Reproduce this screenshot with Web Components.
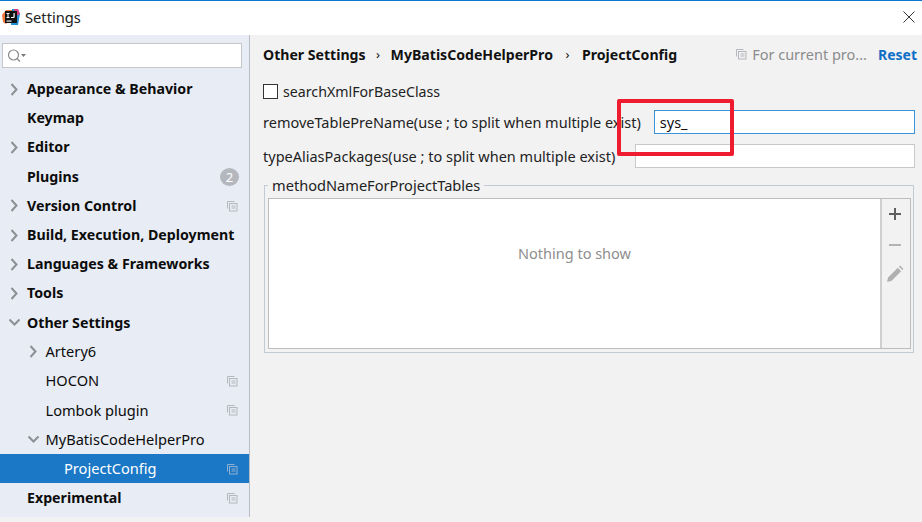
<!DOCTYPE html>
<html>
<head>
<meta charset="utf-8">
<title>Settings</title>
<style>
html, body { margin: 0; padding: 0; background: #fff; }
body { font-family: "Noto Sans", "Open Sans", sans-serif; color: #111; width: 922px; height: 522px; overflow: hidden; }
</style>
</head>
<body>
<settings-window>
    <title-bar slot="title">Settings</title-bar>
    <side-bar slot="side">
        <tree-row arrow="right" bold>Appearance &amp; Behavior</tree-row>
        <tree-row bold>Keymap</tree-row>
        <tree-row arrow="right" bold>Editor</tree-row>
        <tree-row bold badge="2">Plugins</tree-row>
        <tree-row arrow="right" bold copy>Version Control</tree-row>
        <tree-row arrow="right" bold>Build, Execution, Deployment</tree-row>
        <tree-row arrow="right" bold>Languages &amp; Frameworks</tree-row>
        <tree-row arrow="right" bold>Tools</tree-row>
        <tree-row arrow="down" bold>Other Settings</tree-row>
        <tree-row arrow="right" level="1">Artery6</tree-row>
        <tree-row level="1" copy>HOCON</tree-row>
        <tree-row level="1" copy>Lombok plugin</tree-row>
        <tree-row arrow="down" level="1">MyBatisCodeHelperPro</tree-row>
        <tree-row level="2" copy selected>ProjectConfig</tree-row>
        <tree-row bold copy>Experimental</tree-row>
    </side-bar>
    <config-pane slot="main"></config-pane>
</settings-window>

<script>
const COPY_ICON = `<svg width="12" height="12" viewBox="0 0 12 12" fill="none" stroke="currentColor" stroke-width="1">
    <path d="M1.5 8.5v-7h7"/><rect x="3.5" y="3.5" width="7.5" height="7.5"/><path d="M5.5 6h4M5.5 8h4"/></svg>`;

class SettingsWindow extends HTMLElement {
    constructor() {
        super();
        this.attachShadow({ mode: 'open' });
        this.shadowRoot.innerHTML = `
        <style>
            :host { display: flex; flex-direction: column; width: 922px; height: 522px; background: #fff; }
            .body { display: flex; height: 482px; background: #f2f2f3; }
            .foot { flex: 1; background: #f2f2f3; }
        </style>
        <slot name="title"></slot>
        <div class="body"><slot name="side"></slot><slot name="main"></slot></div>
        <div class="foot"></div>`;
    }
}

class TitleBar extends HTMLElement {
    constructor() {
        super();
        this.attachShadow({ mode: 'open' });
        this.shadowRoot.innerHTML = `
        <style>
            :host { display: flex; align-items: center; height: 35px; box-sizing: border-box; border-top: 1px solid #0a78d0;
                padding: 0 0 2px 2px; background: #fff; font-size: 14.7px; color: #222; }
            .logo { width: 18px; height: 18px; margin-right: 5px; flex: none; }
            .grow { flex: 1; }
            .close { width: 12px; height: 12px; margin-right: 7px; flex: none; }
        </style>
        <svg class="logo" viewBox="0 0 18 18">
            <path d="M0 7 4 2h6v8l-6 6-3-2z" fill="#f2783c"/>
            <path d="M10 1h6l2 5-2 11H9z" fill="#1f8fd8"/>
            <path d="M12 1h4l2 5-4 2z" fill="#e23d7d"/>
            <rect x="3" y="3" width="12" height="12" fill="#111"/>
            <rect x="4.500" y="12.500" width="5" height="1.100" fill="#fff"/>
            <path d="M4.500 5h3v.9h-1v3.200h1v.9h-3v-.9h1V5.900h-1zM11.500 5h1.200v3.900q0 1.100-1.400 1.100H9v-1h2q.5 0 .5-.4z" fill="#fff"/>
        </svg>
        <slot></slot>
        <span class="grow"></span>
        <svg class="close" viewBox="0 0 12 12" stroke="#333" stroke-width="1" fill="none"><path d="M.5.500l11 11M11.500.500l-11 11"/></svg>`;
    }
}

class SideBar extends HTMLElement {
    constructor() {
        super();
        this.attachShadow({ mode: 'open' });
        this.shadowRoot.innerHTML = `
        <style>
            :host { display: flex; flex-direction: column; box-sizing: border-box; width: 250px; height: 482px;
                background: #e8ecf4; border-right: 1px solid #b9bcc2; }
            .search { display: flex; align-items: center; height: 25px; box-sizing: border-box; margin: 8px 7px 6.500px 2px;
                background: #fff; border: 1px solid #c4c6c9; padding-left: 4px; }
            .rows { display: flex; flex-direction: column; }
        </style>
        <div class="search">
            <svg width="20" height="16" viewBox="0 0 20 16" fill="none" stroke="#8a8a8a" stroke-width="1.200">
                <circle cx="6.500" cy="7" r="5"/><path d="M10 10.500l3 3"/><path d="M14 6h5l-2.500 3z" fill="#777" stroke="none"/>
            </svg>
        </div>
        <div class="rows"><slot></slot></div>`;
    }
}

class TreeRow extends HTMLElement {
    constructor() {
        super();
        this.attachShadow({ mode: 'open' });
    }

    connectedCallback() {
        const level = Number(this.getAttribute('level') || 0);
        const arrow = this.getAttribute('arrow');
        const badge = this.getAttribute('badge');
        const selected = this.hasAttribute('selected');
        const bold = this.hasAttribute('bold');
        const arrowPath = arrow === 'down' ? 'M1.500 3.500l5 5 5-5' : 'M3.500 1l5 5.500-5 5.500';

        this.shadowRoot.innerHTML = `
        <style>
            :host { display: flex; align-items: center; height: 29.200px; flex: none; box-sizing: border-box;
                padding-left: ${8 + level * 18.500}px; padding-right: 11px; font-size: ${bold ? 14.2 : 14.6}px; line-height: 20px;
                font-weight: ${bold ? 700 : 400};
                background: ${selected ? '#1b78c6' : 'transparent'}; color: ${selected ? '#fff' : '#0c0c0c'}; }
            .arrow { width: 13px; height: 13px; flex: none; margin-right: 6px; }
            .arrow.none { visibility: hidden; }
            .text { flex: 1; white-space: nowrap; padding-bottom: ${bold ? 0 : 1}px; }
            .copy { display: flex; color: ${selected ? '#8fb0cf' : '#b4b7bb'}; }
            .badge { width: 19px; height: 18px; border-radius: 50%; background: #b4b8be; color: #fff; font-size: 13px;
                font-weight: 400; text-align: center; line-height: 18px; margin-right: -1px; }
        </style>
        <svg class="arrow ${arrow ? '' : 'none'}" viewBox="0 0 13 13" fill="none" stroke="#8c8f93" stroke-width="2"><path d="${arrowPath}"/></svg>
        <span class="text"><slot></slot></span>
        ${badge ? `<span class="badge">${badge}</span>` : ''}
        ${this.hasAttribute('copy') ? `<span class="copy">${COPY_ICON}</span>` : ''}`;
    }
}

class ConfigPane extends HTMLElement {
    constructor() {
        super();
        this.attachShadow({ mode: 'open' });
        this.shadowRoot.innerHTML = `
        <style>
            :host { display: block; position: relative; flex: 1; box-sizing: border-box; padding: 0 7px 0 13px; font-size: 14.5px; color: #222; }
            .crumbs { display: flex; align-items: center; height: 38px; margin-right: -2px; font-weight: 700; font-size: 14.1px; color: #111; white-space: nowrap; }
            .sep { margin: 0 10.500px; font-weight: 400; font-size: 13px; }
            .sep.two { margin: 0 12.500px; }
            .grow { flex: 1; }
            .scope { display: flex; align-items: center; gap: 5px; margin-right: 11px; font-weight: 400; font-size: 14.5px; color: #8c8c8c; }
            .scope span { display: flex; color: #b4b7bb; }
            .reset { color: #0f6fc6; font-size: 14px; }
            .check { display: flex; align-items: center; height: 22px; margin-top: 7px; font-size: 14.2px; }
            .box { width: 13px; height: 13px; border: 1px solid #333; background: #fff; margin-right: 5px; }
            .field { display: flex; align-items: center; height: 24px; white-space: nowrap; }
            .field.a { margin-top: 8px; }
            .field.b { margin-top: 10px; }
            .input { flex: 1; height: 24px; box-sizing: border-box; background: #fff; border: 1px solid #c9c9c9; padding-left: 5px; line-height: 22px; color: #111; }
            .a .input { margin-left: 13px; border-color: #3d93d8; }
            .b .input { margin-left: 20px; }
            fieldset-box { margin-top: 17px; }
            .mark { position: absolute; left: 367px; top: 64px; width: 117px; height: 57px; box-sizing: border-box;
                border: 4px solid #ee1c2e; border-radius: 2px; }
        </style>
        <div class="crumbs">
            <span>Other Settings</span><span class="sep">›</span>
            <span>MyBatisCodeHelperPro</span><span class="sep two">›</span>
            <span>ProjectConfig</span>
            <span class="grow"></span>
            <span class="scope"><span>${COPY_ICON}</span>For current pro...</span>
            <span class="reset">Reset</span>
        </div>
        <div class="check"><span class="box"></span>searchXmlForBaseClass</div>
        <div class="field a">removeTablePreName(use ; to split when multiple exist)<div class="input">sys_</div></div>
        <div class="field b">typeAliasPackages(use ; to split when multiple exist)<div class="input"></div></div>
        <fieldset-box label="methodNameForProjectTables"></fieldset-box>
        <div class="mark"></div>`;
    }
}

class FieldsetBox extends HTMLElement {
    constructor() {
        super();
        this.attachShadow({ mode: 'open' });
    }

    connectedCallback() {
        this.shadowRoot.innerHTML = `
        <style>
            :host { display: block; position: relative; height: 168px; box-sizing: border-box; margin-left: 1px; margin-right: 1px;
                border: 1px solid #c3cad6; padding: 12px 2px 2px 3px; }
            .label { position: absolute; left: 3px; top: -10px; padding: 0 4px; background: #f2f2f3; line-height: 19px; font-size: 14.6px; }
            .table { display: flex; height: 151px; box-sizing: border-box; border: 1px solid #bdbdbd; }
            .empty { flex: 1; display: flex; align-items: center; justify-content: center; background: #fff; color: #8e8e8e; padding-bottom: 41px; }
            .tools { width: 30px; box-sizing: border-box; border-left: 2px solid #cfcfcf; display: flex; flex-direction: column; align-items: center; padding: 8px 2px 0 0; gap: 14px; }
        </style>
        <div class="label">${this.getAttribute('label')}</div>
        <div class="table">
            <div class="empty">Nothing to show</div>
            <div class="tools">
                <svg width="14" height="14" viewBox="0 0 14 14" fill="#5f5f5f"><path d="M6 1h2v5h5v2H8v5H6V8H1V6h5z"/></svg>
                <svg width="14" height="14" style="margin-top:3px" viewBox="0 0 14 14" fill="#b3b3b3"><path d="M1 6h12v2H1z"/></svg>
                <svg width="18" height="18" style="margin-top:-1px" viewBox="0 0 16 16" fill="#b0b0b0"><path d="M1 15l.800-4L10.500 2.500l3 3L5 14zM11.500 1.500l1-1 3 3-1 1z"/></svg>
            </div>
        </div>`;
    }
}

customElements.define('settings-window', SettingsWindow);
customElements.define('title-bar', TitleBar);
customElements.define('side-bar', SideBar);
customElements.define('tree-row', TreeRow);
customElements.define('config-pane', ConfigPane);
customElements.define('fieldset-box', FieldsetBox);
</script>
</body>
</html>
